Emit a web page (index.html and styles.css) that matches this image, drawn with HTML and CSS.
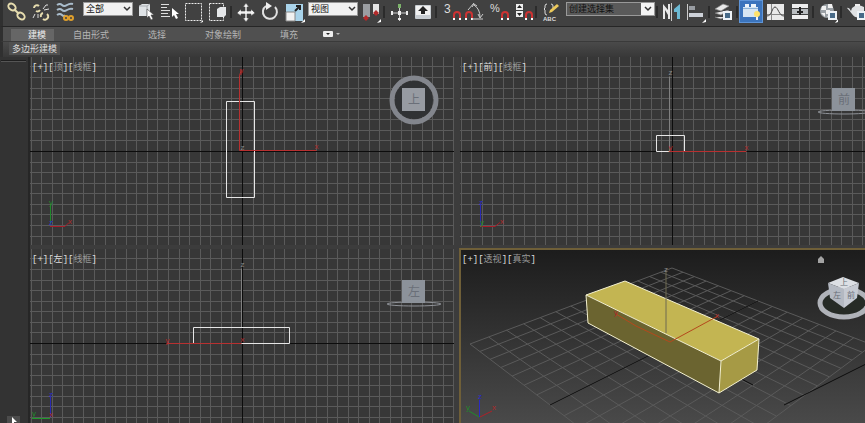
FILE: index.html
```html
<!DOCTYPE html>
<html lang="zh-CN">
<head>
    <meta charset="UTF-8">
    <meta name="viewport" content="width=device-width, initial-scale=1.0">
    <title>多边形建模</title>
    <link rel="stylesheet" href="styles.css">
</head>
<body>
    <!-- 主工具栏 -->
    <header class="toolbar">
        <button class="tool" aria-label="链接"><svg viewBox="0 0 24 22"><g fill="none" stroke="#e6dcae" stroke-width="2"><ellipse cx="7" cy="6" rx="4" ry="3" transform="rotate(40 7 6)"/><ellipse cx="16" cy="15" rx="4" ry="3" transform="rotate(40 16 15)"/><path d="M9 8l5 5"/></g></svg></button>
        <button class="tool" aria-label="取消链接"><svg viewBox="0 0 24 22"><g fill="none" stroke="#e6dcae" stroke-width="2"><path d="M5 7a3 3 0 0 1 5-2M11 9a3 3 0 0 1-4 1M18 13a3 3 0 0 1-4 5M12 16a3 3 0 0 1 2-4"/></g><path d="M14 8l3-4h2M6 13l-2 4M15 9l5-1M9 13v4" fill="none" stroke="#ddd"/></svg></button>
        <button class="tool" aria-label="绑定"><svg viewBox="0 0 24 22"><g fill="none" stroke="#a9bccb" stroke-width="2"><path d="M4 4q3-2 5 0t5 0 6-1M4 9q3-2 5 0t5 0 6-1M4 14q3-2 5 0t3 0"/></g><g fill="none" stroke="#e0a02c" stroke-width="2"><circle cx="13" cy="17" r="2"/><circle cx="18" cy="17" r="2"/></g></svg></button>
        <select class="filter" aria-label="选择过滤器"><option>全部</option></select>
        <button class="tool" aria-label="选择对象"><svg viewBox="0 0 24 22"><path d="M6 5l3-2h8v10l-3 2H6z" fill="#dfe3e6"/><path d="M6 5h8v10M14 5l3-2" fill="none" stroke="#a8adb2"/><path d="M14 8v9l2-2 2 4 2-1-2-4h3z" fill="#fff" stroke="#444" stroke-width=".6"/></svg></button>
        <button class="tool" aria-label="按名称选择"><svg viewBox="0 0 24 22"><path d="M4 3.500h8M4 6.500h6M4 9.500h9M4 12.500h7M4 15.500h9" stroke="#ddd"/><path d="M15 7v9l2-2 2 4 2-1-2-4h3z" fill="#fff"/></svg></button>
        <button class="tool" aria-label="矩形选择"><svg viewBox="0 0 24 22"><path d="M4.500 2.500h16v17h-16z" fill="none" stroke="#eee" stroke-dasharray="2 1"/><path d="M19 22l3-3v2z" fill="#fff"/></svg></button>
        <button class="tool" aria-label="窗口选择"><svg viewBox="0 0 24 22"><path d="M4.500 2.500h14v17h-14z" fill="none" stroke="#eee" stroke-dasharray="2 1"/><path d="M12 8l3-2h6v8l-2 2h-7z" fill="#e5e7e9"/></svg></button>
        <span class="sep"></span>
        <button class="tool" aria-label="移动"><svg viewBox="0 0 24 22"><path d="M13 2l3 4h-2v4h4V8l4 4-4 3v-2h-4v4h2l-3 4-3-4h2v-4H8v2l-4-3 4-4v2h4V6h-2z" fill="#f2f2f2" stroke="#444" stroke-width=".6"/></svg></button>
        <button class="tool" aria-label="旋转"><svg viewBox="0 0 24 22"><path d="M9 5a7 7 0 1 0 9 1" fill="none" stroke="#e0e0e0" stroke-width="2"/><path d="M9 1l6 4-6 4z" fill="#eee"/></svg></button>
        <button class="tool" aria-label="缩放"><svg viewBox="0 0 24 22"><path d="M5 3h17v17H5z" fill="#a9d3ea"/><path d="M5 11h9v9H5z" fill="#f1f1f1" stroke="#888"/><path d="M14 10l5-5M15 5h4v4" fill="none" stroke="#222" stroke-width="2"/><path d="M20 22l4-4v3z" fill="#fff"/></svg></button>
        <select class="coords" aria-label="参考坐标系"><option>视图</option></select>
        <button class="tool" aria-label="轴点中心"><svg viewBox="0 0 24 22"><path d="M5 3h7v13H5z" fill="#9b9ea2"/><path d="M15 3h6v10h-6z" fill="#e3e3e3"/><path d="M8 14l3 3-3 3-3-3zM18 9l3 3-3 3-3-3z" fill="#b32a2a"/><path d="M19 22l4-4v3z" fill="#fff"/></svg></button>
        <span class="sep"></span>
        <button class="tool" aria-label="选择并操纵"><svg viewBox="0 0 24 22"><path d="M13.500 5v15M5 12h17" stroke="#ccc"/><path d="M12 3h3v4h-3z" fill="#7cb36a"/><path d="M5 10h2v4H5zM20 10h2v4h-2zM12 10h3v4h-3zM12 17h3v2h-3z" fill="#eee"/></svg></button>
        <button class="tool" aria-label="快捷键覆盖"><svg viewBox="0 0 24 22"><rect x="5" y="4" width="16" height="14" rx="1" fill="#c7ccd1"/><path d="M6 5h14v9H6z" fill="#f1f1f1"/><path d="M13 5l5 5h-3v3h-4v-3H8z" fill="#222"/></svg></button>
        <span class="sep"></span>
        <button class="tool" aria-label="捕捉开关"><svg viewBox="0 0 24 22"><text class="glyph" x="6" y="12" font-size="12">3</text><path d="M16 18v-4a3 3 0 0 1 6 0v4" fill="none" stroke="#c33" stroke-width="2"/><path d="M15 17h2v2h-2zM21 17h2v2h-2z" fill="#fff"/></svg></button>
        <button class="tool" aria-label="角度捕捉"><svg viewBox="0 0 24 22"><path d="M4 18v-4a3 3 0 0 1 6 0v4" fill="none" stroke="#c33" stroke-width="2"/><path d="M3 17h2v2H3zM9 17h2v2H9z" fill="#fff"/><path d="M6 9l6-7M12 4q6 4 6 12M10 18h11M10 6l2-3 3 2M16 13l2 4 3-4" fill="none" stroke="#ccc"/></svg></button>
        <button class="tool" aria-label="百分比捕捉"><svg viewBox="0 0 24 22"><text class="glyph" x="4" y="11" font-size="11">%</text><path d="M16 18v-4a3 3 0 0 1 6 0v4" fill="none" stroke="#c33" stroke-width="2"/><path d="M15 17h2v2h-2zM21 17h2v2h-2z" fill="#fff"/></svg></button>
        <button class="tool" aria-label="微调器捕捉"><svg viewBox="0 0 24 22"><path d="M6 3h7v6H6zM6 10h7v6H6z" fill="#eee"/><path d="M7 7l2.500-3L12 7zM7 12h5l-2.500 3z" fill="#222"/><path d="M16 18v-4a3 3 0 0 1 6 0v4" fill="none" stroke="#c33" stroke-width="2"/><path d="M15 17h2v2h-2zM21 17h2v2h-2z" fill="#fff"/></svg></button>
        <span class="sep"></span>
        <button class="tool" aria-label="编辑命名选择集"><svg viewBox="0 0 24 22"><path d="M9 3q-2 0-2 2v2l-1 1 1 1v3q0 2 2 2M13 3q2 0 2 2v2l1 1" fill="none" stroke="#ddd"/><path d="M11 12l1-3 7-6 2 2-7 6z" fill="#ecc95b"/><text class="glyph bold" x="5" y="20" font-size="6">ABC</text></svg></button>
        <select class="sets" aria-label="命名选择集"><option>创建选择集</option></select>
        <span class="sep"></span>
        <button class="tool" aria-label="镜像"><svg viewBox="0 0 24 22"><path d="M12.500 2v18" stroke="#ccc"/><path d="M4 18V3l5 6V3h2v15H9v-4L6 9v9z" fill="#e8e8e8"/><path d="M21 3l-6 5v3h3v7h3z" fill="#6cb9d3"/></svg></button>
        <button class="tool" aria-label="对齐"><svg viewBox="0 0 24 22"><path d="M4.500 3v16" stroke="#ccc"/><path d="M6 5h6v4H6z" fill="#999da2"/><path d="M6 12h14v4H6z" fill="#cdd1d8"/><path d="M19 22l4-4v3z" fill="#fff"/></svg></button>
        <span class="sep"></span>
        <button class="tool" aria-label="层管理器"><svg viewBox="0 0 24 22"><path d="M4 8l8-5 6 2-8 5zM4 12l6 2 8-5M4 16l6 2 4-2" fill="#e8e8e8" stroke="#888" stroke-width=".7"/><path d="M12 10h9v9h-9z" fill="#edf2f6"/><path d="M14 12h5v5h-5z" fill="#476a88"/></svg></button>
        <span class="sep"></span>
        <button class="tool on" aria-label="石墨建模工具"><svg viewBox="0 0 24 22"><path d="M3 6h15v10H3z" fill="#d6e6f4"/><path d="M5 3h4v3H5zM11 3h5v3h-5z" fill="#eef5fb"/><path d="M3 7.500h15" stroke="#8eb4d8"/><circle cx="17" cy="13" r="3" fill="#ffe36b"/><path d="M16 16h2v3h-2z" fill="#f5f5f5"/></svg></button>
        <button class="tool" aria-label="曲线编辑器"><svg viewBox="0 0 24 22"><path d="M4 3h17v16H4z" fill="#e9e9e9"/><path d="M8.500 3v16M4 13.500h17" stroke="#888"/><path d="M4 15c5 0 5-9 8-9s4 9 9 9" fill="none" stroke="#444"/></svg></button>
        <button class="tool" aria-label="图解视图"><svg viewBox="0 0 24 22"><path d="M5 3h16v4H5zM5 14h16v4H5z" fill="#eee"/><path d="M5 8h16v5H5z" fill="#b9bdc0"/><path d="M13 6v8M10 11h6" stroke="#222" stroke-width="2"/></svg></button>
        <span class="sep"></span>
        <button class="tool" aria-label="材质编辑器"><svg viewBox="0 0 24 22"><circle cx="12" cy="10" r="7" fill="#9aa0a5"/><path d="M7 5h4v4H6zM13 3h4l1 4h-5zM11 9h4v4h-4zM6 12h4v4zM12 15h4l-2 2z" fill="#f1f1f1"/><path d="M13 10h9v9h-9z" fill="#edf2f6"/><path d="M15 12h5v5h-5z" fill="#476a88"/><path d="M20 22l3-4v3z" fill="#fff"/></svg></button>
        <span class="sep"></span>
        <button class="tool" aria-label="渲染设置"><svg viewBox="0 0 24 22"><path d="M4 7q2-1 4 3l1-3q5-5 12-1v9q-8 4-12-2Q6 9 4 7z" fill="#dfe1e3"/><path d="M12 4h5" stroke="#eee" stroke-width="2"/><path d="M14 10h9v9h-9z" fill="#edf2f6"/><path d="M16 12h5v5h-5z" fill="#476a88"/></svg></button>
    </header>

    <!-- 功能区 -->
    <nav class="tabs">
        <button class="tab active">建模</button>
        <button class="tab">自由形式</button>
        <button class="tab">选择</button>
        <button class="tab">对象绘制</button>
        <button class="tab">填充</button>
        <button class="tab-menu" aria-label="功能区选项"><svg width="20" height="8" viewBox="0 0 20 8"><rect x="0" y="1" width="10" height="6" rx="1" fill="#eee"/><path d="M3 3h4l-2 2z" fill="#222"/><path d="M13 3h4l-2 2z" fill="#bbb"/></svg></button>
    </nav>
    <div class="ribbon">
        <button class="panel-name">多边形建模</button>
    </div>

    <div class="work">
        <aside class="side">
            <span class="grip"></span>
            <button class="expand" aria-label="展开"><svg width="13" height="7" viewBox="0 0 13 7"><path d="M5 1l5 5H7v1H5z" fill="#fff"/></svg></button>
        </aside>

        <main class="views">
            <!-- 顶视图 -->
            <section class="view">
                <svg class="scene"><svg class="center" x="50%" y="50%"><g transform="translate(.5 .5)">
                    <path class="grid-lines"/>
                    <path class="axis" d="M-2000 0H2000M0-2000V2000"/>
                    <path class="wire" d="M-16-50h28v96h-28z"/>
                    <path class="red" d="M-3-1V-76L-1-82M-3-1H74"/>
                    <text class="mark r" x="-3" y="-79">y</text>
                    <text class="mark r" x="72" y="-3">x</text>
                    <text class="mark" x="-2" y="-2">z</text>
                </g></svg></svg>
                <div class="labels"><button>[+]</button><button>[<i>顶</i>]</button><button>[<i>线框</i>]</button></div>
                <svg class="tripod" viewBox="0 0 50 44"><path d="M20.500 12v20" stroke="#1f8a2b"/><path d="M20 33.500h15l4-4" stroke="#a81c28" fill="none"/><text class="mark g" x="19" y="12">y</text><text class="mark b" x="19" y="32">z</text><text class="mark r" x="38" y="31">x</text></svg>
                <svg class="cube" viewBox="0 0 72 76"><circle cx="36" cy="38" r="22" fill="none" stroke="#83868d" stroke-width="5"/><circle cx="36" cy="38" r="19" fill="#303234"/><path d="M24 26h23v23H24z" fill="#979ba2"/><text x="30" y="42">上</text></svg>
            </section>

            <!-- 前视图 -->
            <section class="view">
                <svg class="scene"><svg class="center" x="50%" y="50%"><g transform="translate(.5 .5)">
                    <path class="grid-lines"/>
                    <path class="axis" d="M-2000 0H2000M0-2000V2000"/>
                    <path class="gray" d="M-3-75V0"/>
                    <path class="wire" d="M-16-16h28V0h-28z"/>
                    <path class="red" d="M-3 0H74"/>
                    <text class="mark" x="-4" y="-77">z</text>
                    <text class="mark r" x="72" y="-2">x</text>
                    <text class="mark r" x="-4" y="-2">y</text>
                </g></svg></svg>
                <div class="labels"><button>[+]</button><button>[<i class="hi">前</i>]</button><button>[<i>线框</i>]</button></div>
                <svg class="tripod" viewBox="0 0 50 44"><path d="M20.500 12v20" stroke="#2a2ab4"/><path d="M20 33.500h15l5-4" stroke="#a81c28" fill="none"/><text class="mark b" x="19" y="12">z</text><text class="mark g" x="20" y="32">y</text><text class="mark r" x="40" y="31">x</text></svg>
                <svg class="cube" viewBox="0 0 72 76"><ellipse cx="36" cy="50" rx="26" ry="2" fill="none" stroke="#8f9298"/><path d="M24 26h23v23H24z" fill="#8c929a"/><text x="30" y="42">前</text></svg>
            </section>

            <!-- 左视图 -->
            <section class="view">
                <svg class="scene"><svg class="center" x="50%" y="50%"><g transform="translate(.5 .5)">
                    <path class="grid-lines"/>
                    <path class="axis" d="M-2000 0H2000M0-2000V2000"/>
                    <path class="gray" d="M-1-75V-16"/>
                    <path class="wire" d="M-49-16h96V0h-96z"/>
                    <path class="red" d="M-76 0H-1"/>
                    <text class="mark" x="-2" y="-77">z</text>
                    <text class="mark r" x="-77" y="-1">y</text>
                    <text class="mark r" x="-2" y="-2">x</text>
                </g></svg></svg>
                <div class="labels"><button>[+]</button><button>[<i class="hi">左</i>]</button><button>[<i>线框</i>]</button></div>
                <svg class="tripod" viewBox="0 0 50 44"><path d="M20.500 12v20" stroke="#2a2ab4"/><path d="M2 33.500h18" stroke="#1f9a2b"/><text class="mark b" x="19" y="12">z</text><text class="mark r" x="19" y="32">x</text><text class="mark g" x="2" y="31">y</text></svg>
                <svg class="cube" viewBox="0 0 72 76"><ellipse cx="36" cy="50" rx="27" ry="2" fill="none" stroke="#8f9298"/><path d="M24 26h23v23H24z" fill="#8c929a"/><text x="30" y="42">左</text></svg>
            </section>

            <!-- 透视图 -->
            <section class="view active">
                <svg class="scene"><svg class="center" x="50%" y="50%">
                    <path class="floor"/>
                    <path class="axis" d="M-122 62L86-42M0 0L81 42M112 62L240-2"/>
                    <path d="M-86-48L-47-62 87-4 49 18z" fill="#c3b552"/>
                    <path d="M-86-48L49 18 47 50-84-20z" fill="#6b6430"/>
                    <path d="M49 18L87-4 85 27 47 50z" fill="#a69a45"/>
                    <path d="M-86-48L-47-62 87-4 85 27 47 50-84-20zL49 18 87-4M49 18L47 50" fill="none" stroke="#f4f1d0"/>
                    <path class="gray dark" d="M-6-72V-10"/>
                    <path d="M-56-29L-36-17-2-1 46-27" stroke="#b5481c" fill="none"/>
                    <text class="mark" x="-8" y="-71">z</text>
                    <text class="mark r" x="43" y="-25">x</text>
                    <text class="mark r" x="-58" y="-28">y</text>
                </svg></svg>
                <div class="labels"><button>[+]</button><button>[<i>透视</i>]</button><button>[<i>真实</i>]</button></div>
                <svg class="tripod" viewBox="0 0 50 44"><path d="M19.500 15v17" stroke="#2a2ac4"/><path d="M20 32l12-6" stroke="#b01f28"/><path d="M19 32L9 26" stroke="#1f8a2b"/><text class="mark b" x="18" y="14">z</text><text class="mark r" x="32" y="25">x</text><text class="mark g" x="6" y="25">y</text></svg>
                <svg class="cube" viewBox="0 0 72 76">
                    <path d="M10 5l3-3 3 3v4h-6z" fill="#a3a3a3"/>
                    <ellipse cx="36" cy="49" rx="24" ry="14" fill="#262b26" stroke="#b0b3b9" stroke-width="5"/>
                    <path d="M20 29l15-6 16 6-15 6z" fill="#dcdfe4"/>
                    <path d="M20 29l16 6v19L22 44z" fill="#b4b9c2"/>
                    <path d="M51 29l-15 6v19l13-10z" fill="#c6cad2"/>
                    <text class="face" x="32" y="31">上</text>
                    <text class="face" x="25" y="44">左</text>
                    <text class="face" x="39" y="44">前</text>
                </svg>
            </section>
        </main>
    </div>

    <script>
        // 正交视图栅格
        const step = 10.57;
        let d = '';
        for (let i = -150; i <= 150; i++) {
            const p = Math.round(i * step);
            d += `M${p} -2000V2000M-2000 ${p}H2000`;
        }
        document.querySelectorAll('.grid-lines').forEach(el => el.setAttribute('d', d));

        // 透视栅格: 由地面四个点求投影
        const [p0, p1, p2, p3] = [[-202, 1], [0, -75], [86, -42], [-122, 62]];
        const sx = p0[0] - p1[0] + p2[0] - p3[0];
        const sy = p0[1] - p1[1] + p2[1] - p3[1];
        const dx1 = p1[0] - p2[0], dx2 = p3[0] - p2[0];
        const dy1 = p1[1] - p2[1], dy2 = p3[1] - p2[1];
        const den = dx1 * dy2 - dx2 * dy1;
        const g = (sx * dy2 - dx2 * sy) / den;
        const h = (dx1 * sy - sx * dy1) / den;

        function project(u, v) {
            const w = g * u + h * v + 1;
            const x = (p1[0] - p0[0] + g * p1[0]) * u + (p3[0] - p0[0] + h * p3[0]) * v + p0[0];
            const y = (p1[1] - p0[1] + g * p1[1]) * u + (p3[1] - p0[1] + h * p3[1]) * v + p0[1];
            return (x / w).toFixed(1) + ' ' + (y / w).toFixed(1);
        }

        const cols = 14, rows = 7;
        let f = '';
        for (let i = 0; i <= cols; i++) {
            f += `M${project(i / cols, 0)}L${project(i / cols, 2)}`;
        }
        for (let j = 0; j <= rows * 2; j++) {
            f += `M${project(0, j / rows)}L${project(1, j / rows)}`;
        }
        document.querySelector('.floor').setAttribute('d', f);
    </script>
</body>
</html>
```

FILE: styles.css
```css
* {
    box-sizing: border-box;
}

body {
    margin: 0;
    height: 100vh;
    display: flex;
    flex-direction: column;
    overflow: hidden;
    background: #3c3c3c;
    color: #ccc;
    font: 9px/12px "Liberation Sans", "Noto Sans CJK SC", sans-serif;
}

button {
    margin: 0;
    padding: 0;
    border: 0;
    background: none;
    color: inherit;
    font: inherit;
}

svg {
    display: block;
}

/* 工具栏 */
.toolbar {
    display: flex;
    flex: none;
    align-items: flex-start;
    height: 27px;
    padding-left: 2px;
    overflow: hidden;
    background: #414141;
    border-left: 3px solid #303030;
    border-bottom: 1px solid #262626;
}

.tool {
    flex: none;
    width: 24px;
    height: 23px;
}

.tool svg {
    width: 24px;
    height: 22px;
}

.tool.on {
    background: #3b74bd;
    border: 1px solid #5f95d8;
    overflow: hidden;
}

.glyph {
    fill: #ddd;
}

.bold {
    font-weight: bold;
}

.sep {
    flex: none;
    width: 2px;
    height: 12px;
    margin: 6px 1px 0;
    background: #2b2b2b;
}

select {
    flex: none;
    appearance: none;
    height: 14px;
    margin: 2px 0 0;
    padding: 0 2px;
    border: 1px solid #999;
    border-radius: 0;
    color: #111;
    font: inherit;
    background: #f1f1f1 url("data:image/svg+xml,%3Csvg xmlns='http://www.w3.org/2000/svg' width='10' height='12'%3E%3Cpath d='M2 4l3 3 3-3' fill='none' stroke='%23333' stroke-width='1.500'/%3E%3C/svg%3E") no-repeat right center;
}

.filter {
    width: 50px;
    margin-left: 6px;
}

.coords {
    width: 50px;
    margin-left: 3px;
}

.sets {
    width: 89px;
    margin-left: 4px;
    background-color: #5a5a5a;
    background-image: url("data:image/svg+xml,%3Csvg xmlns='http://www.w3.org/2000/svg' width='13' height='12'%3E%3Cpath d='M0 0h13v12H0z' fill='%23f4f4f4'/%3E%3Cpath d='M4 4l3 3 3-3' fill='none' stroke='%23333' stroke-width='1.500'/%3E%3C/svg%3E");
}

/* 功能区 */
.tabs {
    display: flex;
    flex: none;
    align-items: flex-end;
    height: 15px;
    padding-left: 8px;
    background: #505050;
    border-left: 3px solid #303030;
    border-bottom: 1px solid #3a3a3a;
}

.tab {
    padding: 0 20px 0 19px;
    color: #b5b5b5;
}

.tab.active {
    padding: 0 8px 0 17px;
    background: #666;
    color: #eee;
}

.tab-menu {
    margin-left: 5px;
    padding-bottom: 3px;
}

.ribbon {
    display: flex;
    flex: none;
    align-items: flex-start;
    height: 15px;
    padding-left: 6px;
    background: linear-gradient(#4a4a4a, #383838);
    border-left: 3px solid #303030;
}

.panel-name {
    height: 13px;
    padding: 0 3px;
    background: #505050;
    color: #ddd;
}

/* 工作区 */
.work {
    display: flex;
    flex: 1;
    min-height: 0;
}

.side {
    display: flex;
    flex: none;
    flex-direction: column;
    justify-content: space-between;
    width: 30px;
    background: #333;
    border-right: 2px solid #262626;
}

.grip {
    height: 2px;
    margin: 3px 2px 0 1px;
    background: #1f1f1f;
    border-bottom: 1px solid #555;
}

.expand {
    width: 13px;
    margin-left: 7px;
    background: #4c4c4c;
}

/* 四个视口, 右下两侧超出窗口 */
.views {
    display: grid;
    flex: 1;
    grid-template: 1fr 1fr / 1fr 1fr;
    gap: 4px 6px;
    margin: 0 -19px -14px 0;
}

.view {
    position: relative;
    min-width: 0;
    min-height: 0;
    background: #373737;
}

.view.active {
    background: linear-gradient(#1c1c1c, #4d4d4d);
    outline: 2px solid #6f5f38;
    outline-offset: -1px;
}

.scene {
    position: absolute;
    width: 100%;
    height: 100%;
}

.center {
    overflow: visible;
}

.grid-lines,
.axis,
.wire,
.red,
.gray,
.floor {
    fill: none;
    stroke-width: 1px;
}

.grid-lines {
    stroke: #5a5a5a;
}

.axis {
    stroke: #0c0c0c;
}

.wire {
    stroke: #e6e6e6;
}

.red {
    stroke: #b83030;
}

.gray {
    stroke: #808080;
}

.gray.dark {
    stroke: #6e6a50;
}

.floor {
    stroke: #5a5a5a;
}

.mark {
    font-size: 8px;
    fill: #8a8a8a;
}

.mark.r {
    fill: #b02a2a;
}

.mark.g {
    fill: #1f8a2b;
}

.mark.b {
    fill: #2a2ad0;
}

.labels {
    position: absolute;
    top: 5px;
    left: 2px;
    display: flex;
    color: #ddd;
    font-family: "Liberation Mono", "Noto Sans CJK SC", monospace;
}

.labels i {
    font-style: normal;
    color: #999;
}

.labels .hi {
    color: #ddd;
}

.tripod {
    position: absolute;
    left: 0;
    bottom: 8px;
    width: 50px;
    height: 44px;
}

.cube {
    position: absolute;
    top: 5px;
    right: 4px;
    width: 72px;
    height: 76px;
    font-size: 12px;
    fill: #6a6f78;
}

.face {
    font-size: 8px;
}
```
